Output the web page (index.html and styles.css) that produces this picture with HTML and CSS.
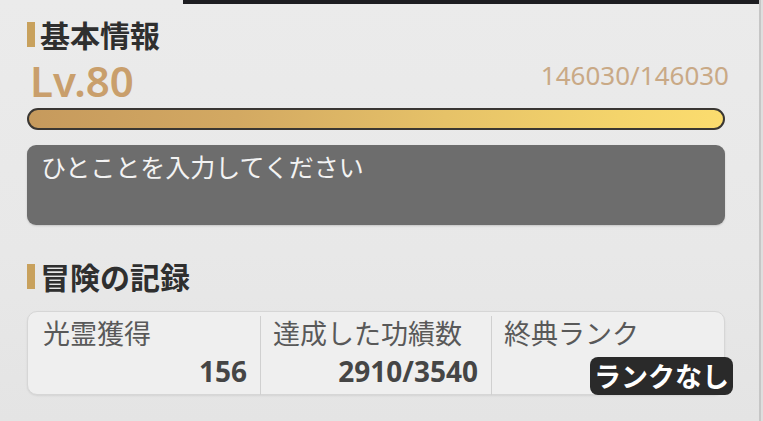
FILE: index.html
```html
<!DOCTYPE html>
<html lang="ja">
<head>
<meta charset="utf-8">
<link rel="stylesheet" href="styles.css">
</head>
<body>
<div class="screen">
  <div class="main">
    <div class="topbar"></div>
    <div class="content">
      <div class="heading"><span class="mark"></span><span class="heading-text">基本情報</span></div>
      <div class="level-row">
        <span class="level">Lv.80</span>
        <span class="exp">146030/146030</span>
      </div>
      <div class="bar"></div>
      <div class="comment">ひとことを入力してください</div>
      <div class="heading heading-2"><span class="mark"></span><span class="heading-text">冒険の記録</span></div>
      <div class="card">
        <div class="col col-first">
          <div class="label">光霊獲得</div>
          <div class="value">156</div>
        </div>
        <div class="col">
          <div class="label">達成した功績数</div>
          <div class="value">2910/3540</div>
        </div>
        <div class="col col-last">
          <div class="label">終典ランク</div>
          <div class="value value-badge"><span class="badge">ランクなし</span></div>
        </div>
      </div>
    </div>
  </div>
  <div class="edge"></div>
</div>
</body>
</html>
```

FILE: styles.css
```css
html, body {
  margin: 0;
  padding: 0;
}
body {
  background: #e9e9e9;
  font-family: "Noto Sans", "Noto Sans CJK JP", sans-serif;
}
.screen {
  width: 763px;
  height: 421px;
  display: flex;
  overflow: hidden;
  background: linear-gradient(180deg, #ebebeb 0%, #e8e8e8 60%, #e4e4e4 100%);
}
.main {
  width: 759px;
  display: flex;
  flex-direction: column;
}
.topbar {
  margin-left: 183px;
  height: 4px;
  background: #1d1d21;
}
.edge {
  width: 2px;
  border-left: 2px solid #c6c6c6;
  background: #dedede;
}
.content {
  padding: 0 34px 0 27px;
  display: flex;
  flex-direction: column;
}
.heading {
  margin-top: 14px;
  height: 32px;
  display: flex;
  align-items: center;
}
.heading-2 {
  margin-top: 35px;
}
.mark {
  width: 8px;
  height: 25px;
  background: #c8a15d;
  margin-right: 5px;
}
.heading-text {
  font-family: "Noto Sans CJK JP", sans-serif;
  font-weight: 700;
  font-size: 30px;
  line-height: 32px;
  color: #2f2f2f;
}
.level-row {
  margin-top: 9px;
  height: 44px;
  display: flex;
  justify-content: space-between;
  align-items: flex-start;
}
.level {
  font-family: "Noto Sans", sans-serif;
  font-weight: 600;
  font-size: 42px;
  line-height: 44px;
  color: #c99f6c;
  padding-left: 3px;
}
.exp {
  margin-top: 1px;
  margin-right: -4px;
  font-family: "Noto Sans", sans-serif;
  font-size: 26px;
  line-height: 30px;
  color: #c9a986;
}
.bar {
  margin-top: 5px;
  height: 22px;
  box-sizing: border-box;
  border: 2px solid #3a3733;
  border-radius: 11px;
  background: linear-gradient(90deg, #c69a5d 0%, #d3a962 30%, #e6c268 60%, #f4d46b 85%, #fbdc6e 100%);
}
.comment {
  margin-top: 15px;
  height: 80px;
  box-sizing: border-box;
  padding: 4px 14px;
  border-radius: 9px;
  background: #6d6d6d;
  box-shadow: 0 1px 2px rgba(0, 0, 0, 0.15);
  font-family: "Noto Sans CJK JP", sans-serif;
  font-size: 25px;
  line-height: 34px;
  color: #f3f3f3;
}
.card {
  margin-top: 19px;
  height: 84px;
  box-sizing: border-box;
  border: 1px solid #d6d6d6;
  border-radius: 10px;
  background: #efefef;
  box-shadow: 0 1px 2px rgba(0, 0, 0, 0.08);
  display: grid;
  grid-template-columns: 232px 231px 1fr;
}
.col {
  display: flex;
  flex-direction: column;
  padding: 4px 13px 0 12px;
  border-left: 1px solid #d0d0d0;
  margin: 4px 0 2px;
}
.col-first {
  border-left: none;
  padding-left: 15px;
}
.label {
  margin-top: -4px;
  font-family: "Noto Sans CJK JP", sans-serif;
  font-size: 27px;
  line-height: 34px;
  color: #595959;
}
.value {
  margin-top: 5px;
  text-align: right;
  font-family: "Noto Sans", sans-serif;
  font-weight: 700;
  font-size: 28px;
  line-height: 32px;
  color: #454545;
}
.value-badge {
  display: flex;
  justify-content: flex-end;
  margin-right: -22px;
}
.badge {
  margin-top: 2px;
  width: 143px;
  height: 38px;
  border-radius: 8px;
  background: #2a2a2a;
  color: #ffffff;
  font-family: "Noto Sans CJK JP", sans-serif;
  font-weight: 700;
  font-size: 27px;
  line-height: 38px;
  text-align: center;
}
```
